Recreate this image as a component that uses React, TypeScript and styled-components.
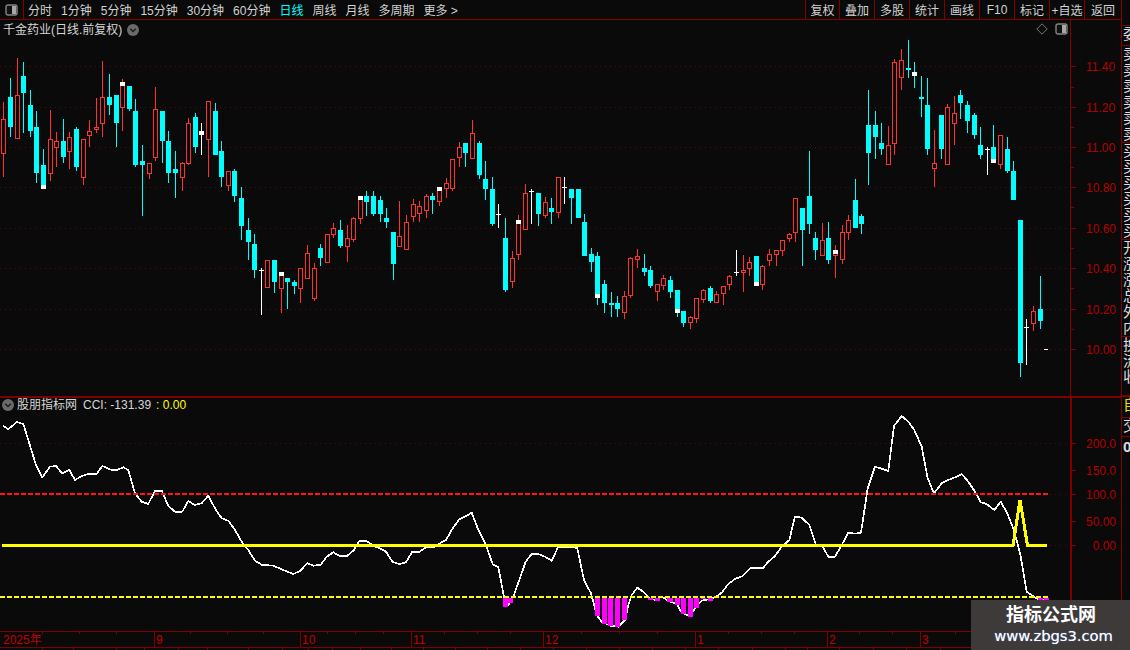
import React from 'react';
import styled, { createGlobalStyle } from 'styled-components';

const BG = '#0a0a0a';
const LINE = '#800000';
const DOT = '#560a0a';
const AXIS = '#b40000';
const FONT = '"Liberation Sans", "Noto Sans CJK SC", sans-serif';

const Global = createGlobalStyle`
  html, body { margin: 0; padding: 0; background: ${BG}; overflow: hidden; }
  #root { width: 1130px; height: 650px; }
`;

const Page = styled.div`
  position: relative;
  width: 1130px;
  height: 650px;
  display: grid;
  grid-template-columns: 1121px 9px;
  background: ${BG};
  font-family: ${FONT};
  overflow: hidden;
`;
const Main = styled.div`
  display: flex;
  flex-direction: column;
  min-width: 0;
`;
const Toolbar = styled.div`
  height: 19px;
  display: flex;
  align-items: stretch;
  border-bottom: 1px solid ${LINE};
  font-size: 12px;
  color: #d2d2d2;
`;
const LayoutBtn = styled.div`
  width: 23px;
  display: flex;
  align-items: center;
  justify-content: center;
  border-right: 1px solid ${LINE};
  box-sizing: content-box;
`;
const Tabs = styled.div`
  display: flex;
  align-items: center;
  gap: 9px;
  padding-left: 4px;
  flex: 1;
`;
const Tab = styled.span<{ $active?: boolean }>`
  color: ${p => (p.$active ? '#00ffff' : '#d2d2d2')};
  white-space: nowrap;
`;
const Actions = styled.div`
  display: flex;
  align-items: stretch;
`;
const Action = styled.div`
  width: 34px;
  border-left: 1px solid ${LINE};
  display: flex;
  align-items: center;
  justify-content: center;
  white-space: nowrap;
  &:first-child { width: 33px; }
  &:last-child { width: 36px; }
`;

const PricePane = styled.div`
  position: relative;
  height: 376px;
`;
const PaneSvg = styled.svg`
  display: block;
`;
const PriceTitle = styled.div`
  position: absolute;
  left: 3px;
  top: 2px;
  display: flex;
  align-items: center;
  gap: 5px;
  font-size: 12px;
  line-height: 16px;
  color: #d6d6d6;
`;
const PaneTools = styled.div`
  position: absolute;
  left: 1036px;
  top: 3px;
  display: flex;
  align-items: center;
  gap: 7px;
`;
const IndicatorPane = styled.div`
  position: relative;
  height: 233px;
  border-top: 2px solid ${LINE};
`;
const IndicatorTitle = styled.div`
  position: absolute;
  left: 2px;
  top: -1px;
  display: flex;
  align-items: center;
  gap: 3px;
  font-size: 12px;
  line-height: 16px;
  color: #d6d6d6;
`;
const Reading = styled.span<{ $yellow?: boolean }>`
  margin-left: ${p => (p.$yellow ? '2px' : '3px')};
  font-size: 12px;
  color: ${p => (p.$yellow ? '#ffff00' : '#d6d6d6')};
`;
const DatePane = styled.div`
  height: 20px;
  overflow: hidden;
`;

const Sidebar = styled.div`
  display: flex;
  flex-direction: column;
  border-left: 1px solid ${LINE};
  overflow: hidden;
  height: 650px;
  box-sizing: border-box;
`;
const SideGroup = styled.div<{ $h: number; $thick?: boolean; $open?: boolean }>`
  height: ${p => p.$h}px;
  box-sizing: border-box;
  flex: none;
  overflow: hidden;
  border-bottom: ${p => (p.$open ? 0 : p.$thick ? 2 : 1)}px solid ${LINE};
  padding-left: 1px;
  padding-top: ${p => (p.$open ? 2 : 0)}px;
`;
const SideRow = styled.div<{ $color?: string; $bold?: boolean }>`
  height: 16.1px;
  line-height: 16px;
  font-size: 15px;
  white-space: nowrap;
  color: ${p => p.$color || '#dcdcdc'};
  font-weight: ${p => (p.$bold ? 700 : 400)};
`;

const Watermark = styled.div`
  position: absolute;
  left: 971px;
  top: 600px;
  width: 159px;
  height: 50px;
  background: #3e3a3a;
  display: flex;
  flex-direction: column;
  align-items: center;
  color: #fff;
`;
const WmTitle = styled.div`
  font-size: 18px;
  font-weight: 700;
  line-height: 22px;
  margin-top: 4px;
  margin-left: 1px;
`;
const WmUrl = styled.div`
  font-family: "DejaVu Sans", sans-serif;
  font-size: 14.7px;
  line-height: 20px;
  color: #fff;
  text-shadow: 0 0 1px #7fb0ff;
  margin-left: 6px;
`;

const PanelIcon = () => (
  <svg width="13" height="12" viewBox="0 0 13 12">
    <rect x="1" y="1" width="11" height="10" rx="2" fill="#111" stroke="#858585" strokeWidth="1.4" />
    <rect x="7" y="2" width="4" height="8" fill="#a8a8a8" />
  </svg>
);
const ChevronDisc = () => (
  <svg width="12" height="12" viewBox="0 0 12 12">
    <circle cx="6" cy="6" r="6" fill="#6a6a6a" />
    <path d="M3.2 4.8 L6 7.6 L8.8 4.8" fill="none" stroke="#1c1c1c" strokeWidth="1.4" />
  </svg>
);
const Diamond = () => (
  <svg width="12" height="12" viewBox="0 0 12 12">
    <path d="M6 .8 L11.2 6 L6 11.2 L.8 6 Z" fill="none" stroke="#777" strokeWidth="1" />
  </svg>
);

type K = [string, number, number, number, number, number?, number?];
const K_DATA: K[] = [
  ['r',102,177,119,153],['c',78,137,97,127],['r',58,138,95,138],['c',62,133,76,93],['c',90,137,105,131],
  ['c',111,183,127,173],['c',149,189,165,185,185,189],['r',110,181,139,173],['r',132,167,141,147],['c',119,163,141,157],
  ['r',132,169,137,151],['c',127,171,129,167],['r',139,185,139,177],['r',120,147,131,135],['r',98,133,127,129],
  ['r',61,137,97,123],['c',74,115,97,105],['c',95,147,95,123],['r',79,131,82,107,82,86],['c',86,111,86,109],
  ['c',99,167,111,165],['c',145,216,161,165],['r',163,179,163,173],['r',87,161,109,157],['c',111,163,111,141],
  ['c',131,183,141,173],['c',151,198,169,173],['r',162,191,163,177],['r',118,165,123,163],['c',113,153,117,147],
  ['w',123,155,131,135],['r',101,177,101,139],['c',103,155,111,155],['c',141,187,151,177],['r',171,191,171,185],
  ['c',169,202,171,196],['c',187,240,198,226],['c',218,260,230,242],['c',234,278,244,270],['x',268,315,270,271],
  ['r',260,287,260,287],['c',260,293,260,282],['r',272,313,272,288,272,276],['c',278,309,278,282],['c',280,294,282,286],
  ['r',268,303,268,288],['r',245,279,253,278],['r',263,301,268,298],['c',244,266,248,258],['r',234,263,234,262],
  ['r',223,238,228,234],['c',220,248,230,246],['r',225,262,238,246],['r',217,242,218,239],['r',196,224,196,218,196,200],
  ['c',191,216,196,202],['c',191,216,196,214],['c',196,222,200,214],['c',208,228,218,222],['c',232,280,232,264],
  ['r',201,247,236,246],['r',215,249,222,249],['r',199,222,204,216],['r',201,222,206,213],['r',194,218,196,210],
  ['c',193,214,196,200],['r',187,206,187,201,187,191],['r',178,198,183,188],['r',159,191,159,188],['r',142,167,147,157],
  ['c',143,167,143,153],['r',120,158,133,158],['c',141,179,143,175],['c',161,200,179,189],['c',177,226,189,224],
  ['x',204,228,214,215],['c',218,292,238,290],['r',251,288,258,281],['r',215,260,220,254,220,224],['r',184,230,193,229],
  ['x',189,224,191,192],['c',193,226,193,214],['r',197,218,202,215],['c',198,224,208,212],['r',177,218,177,212],
  ['x',177,204,187,188],['c',189,224,189,198],['c',189,218,189,218],['c',214,256,222,256],['c',248,272,254,262],
  ['c',252,305,256,294,294,298],['c',280,313,284,303],['c',292,317,303,305],['c',296,317,303,309],['r',291,319,296,312],
  ['r',257,298,258,295],['r',249,268,256,259],['c',254,276,268,272],['c',266,288,270,286],['r',284,301,284,291],
  ['r',275,290,278,285],['c',276,298,280,292],['c',290,317,290,309,309,313],['c',311,327,311,323],['r',316,329,317,322],
  ['r',298,323,298,318],['r',289,303,290,299],['c',286,303,288,301],['r',291,303,294,302],['r',286,305,286,293],
  ['r',275,290,276,284],['x',250,276,272,273],['r',255,292,270,272],['r',257,276,262,268],['c',256,286,256,282,282,286],
  ['r',265,290,266,284],['r',249,266,254,260],['r',250,266,250,254],['r',240,256,240,250],['r',233,242,234,238],
  ['r',198,242,198,232],['c',208,266,208,230],['c',151,234,196,224],['c',232,260,238,250],['r',223,255,240,255],
  ['c',222,264,238,260],['r',245,278,250,255,250,254],['r',225,264,232,259],['r',215,240,220,232],['c',179,228,200,228],
  ['c',214,234,216,224],['c',90,185,125,153],['c',111,159,125,137],['c',123,155,143,149],['r',126,164,145,164],
  ['r',59,155,62,143],['r',49,90,60,77],['c',40,78,68,70],['z',62,88,72,76],['c',76,117,97,99],
  ['c',78,155,105,149],['r',130,187,163,168],['c',115,159,115,149],['r',104,164,107,164],['r',96,145,113,123],
  ['c',90,119,95,103],['c',101,133,105,121],['c',113,139,115,135],['c',127,159,145,155],['x',147,175,149,150],
  ['c',125,163,147,159,159,163],['r',135,169,135,164],['c',137,173,149,171],['c',161,200,171,200],['c',220,377,220,363],
  ['x',319,365,327,328],['r',306,331,311,323],['c',276,329,309,321],
];

const pts = (x0: number, y0: number, raw: number[]) => {
  const out: string[] = [];
  for (let i = 0; i < raw.length; i += 2) out.push(`${(x0 + raw[i] / 3).toFixed(1)},${(y0 + raw[i + 1] / 3).toFixed(1)}`);
  return out;
};
const CCI = [
  ...pts(0, 390, [10,107,25,118,50,96,70,102,85,150,108,225,127,262,150,230,168,228,186,250,208,240,225,270,245,258,265,252,290,252,307,228,335,240,350,240,370,232,385,240,405,310,425,335,445,342,465,302,485,302,505,348,525,365,547,365,565,333,583,345,605,340,625,317,645,355,665,385,685,392,705,420,725,455,745,480,765,512,785,524,820,527,850,540,880,552,900,543,922,520,940,527,962,524,980,500,1000,487,1017,497,1042,497,1062,480,1078,453,1100,453,1125,470]),
  ...pts(380, 480, [0,205,18,215,37,245,58,252,78,247,97,215,118,215,137,203,163,200,180,190,198,180,218,145,238,118,258,108,275,98,293,145,318,195,338,253,355,262,372,350,385,375,400,350,418,300,437,245,455,222,475,222,495,230,515,242,535,200,575,200,592,205,612,300,633,340,645,385,650,405,665,425,690,437,715,440,735,420,745,375,755,345,772,323,790,335,808,355,825,360,845,350,870,365,890,372,905,398,930,408,945,385,965,362,985,358,1005,352,1025,338,1045,312,1065,297,1088,288,1110,265,1140,263]),
  ...pts(760, 390, [10,533,25,515,45,498,65,470,88,450,105,380,125,383,148,405,168,465,185,465,205,500,225,500,245,465,265,428,285,431,303,428,323,295,345,230,365,236,385,243,402,108,425,78,445,95,463,120,485,170,503,265,522,310,545,280,565,270,585,262,605,252,625,275,645,305,662,337,680,342,703,360,722,335,742,370,762,420,782,500,800,605,825,622,840,630,860,630]),
].join(' ');

const BARS: [number, number, number][] = [
  [503,5,607],[508,5,603],[595,5,616],[602,5,624],[608,5,626],[615,5,627],[622,5,620],[648,5,600],[655,5,601],
  [667,6,602],[675,5,605],[681,5,614],[688,5,617],[694,5,608],[701,5,599],[708,5,601],[1038,5,600],[1044,5,600],
];

const PRICE_TICKS: [string, number][] = [
  ['11.40',66],['11.20',107],['11.00',147],['10.80',187],['10.60',228],['10.40',268],['10.20',309],['10.00',349],
];
const PRICE_MINOR = [87,127,167,207,248,288,329];
const CCI_TICKS: [string, number][] = [['200.0',443],['150.0',470],['100.0',494],['50.00',521],['0.00',545]];
const MONTHS: [string, number, number][] = [['2025年',0,3],['9',154,156],['10',300,302],['11',411,413],['12',543,545],['1',695,697],['2',827,829],['3',920,922]];
const TOP_TICKS = [42,79,116,190,227,263,327,355,383,444,477,510,581,619,657,728,761,794,859,892,955,990,1025];
const BOT_TICKS = [42,73,116,144,178,207,248,282,308,332,360,391,423,455,487,520,553,586,619,652,685,718,752,785,807,839,873,906,940,973];

const Candle = ({ k, i }: { k: K; i: number }) => {
  const x = Math.round(3.4 + 6.6 * i);
  const [t, hi, lo, top, bot, capA, capB] = k;
  if (t === 'x') {
    return (
      <g>
        <rect x={x} y={hi} width={1} height={lo - hi} fill="#fff" />
        <rect x={x - 2} y={top} width={5} height={Math.max(1, bot - top)} fill="#fff" />
      </g>
    );
  }
  if (t === 'w' || t === 'z') {
    return (
      <g>
        <rect x={x} y={hi} width={1} height={lo - hi} fill={t === 'z' ? '#00ffff' : '#fff'} />
        <rect x={x - 2} y={top} width={5} height={bot - top} fill="#fff" />
      </g>
    );
  }
  if (t === 'c') {
    return (
      <g>
        <rect x={x} y={hi} width={1} height={lo - hi} fill="#00ffff" />
        <rect x={x - 2} y={top} width={5} height={bot - top} fill="#00ffff" />
        {capA !== undefined && <rect x={x - 2} y={capA} width={5} height={(capB as number) - capA} fill="#fff" />}
      </g>
    );
  }
  return (
    <g>
      <rect x={x} y={hi} width={1} height={lo - hi} fill="#ff3232" />
      <rect x={x - 2} y={top} width={4} height={bot - top} fill={BG} stroke="#ff3232" strokeWidth={1} transform="translate(.5 .5)" />
      {capA !== undefined && <rect x={x - 2} y={top} width={5} height={(capB as number) - top} fill="#fff" />}
    </g>
  );
};

const AxisLabel = styled.text`
  font-family: "Liberation Sans", sans-serif;
  font-size: 12px;
  fill: ${AXIS};
`;
const MonthLabel = styled.text`
  font-family: "Liberation Sans", "Noto Sans CJK SC", sans-serif;
  font-size: 12px;
  fill: #c00000;
`;
const PeekLabel = styled.text<{ $cyan?: boolean }>`
  font-family: "Liberation Sans", "Noto Sans CJK SC", sans-serif;
  font-size: 14px;
  fill: ${p => (p.$cyan ? '#00ffff' : '#e8e8e8')};
`;

const TABS = ['分时','1分钟','5分钟','15分钟','30分钟','60分钟','日线','周线','月线','多周期','更多 >'];
const ACTIONS = ['复权','叠加','多股','统计','画线','F10','标记','+自选','返回'];
const SIDE_GROUPS: { h: number; rows: string[] }[] = [
  { h: 26, rows: [] },
  { h: 20, rows: ['委比'] },
  { h: 97, rows: ['卖五','卖四','卖三','卖二','卖一','卖'] },
  { h: 97, rows: ['买一','买二','买三','买四','买五','买'] },
  { h: 97, rows: ['开盘','涨跌','涨幅','总手','外盘','内盘'] },
];

export default function App() {
  return (
    <Page>
      <Global />
      <Main>
        <Toolbar>
          <LayoutBtn><PanelIcon /></LayoutBtn>
          <Tabs>
            {TABS.map(t => <Tab key={t} $active={t === '日线'}>{t}</Tab>)}
          </Tabs>
          <Actions>
            {ACTIONS.map(a => <Action key={a}>{a}</Action>)}
          </Actions>
        </Toolbar>
        <PricePane>
          <PaneSvg width={1121} height={376} viewBox="0 20 1121 376" shapeRendering="crispEdges">
            {PRICE_TICKS.map(([, y]) => (
              <line key={y} x1={0} x2={1070} y1={y + 0.5} y2={y + 0.5} stroke={DOT} strokeDasharray="1 4" />
            ))}
            <rect x={1070} y={20} width={1} height={376} fill={LINE} />
            {PRICE_TICKS.map(([l, y]) => (
              <g key={l}>
                <rect x={1071} y={y} width={5} height={1} fill={LINE} />
                <AxisLabel x={1086} y={y + 5}>{l}</AxisLabel>
              </g>
            ))}
            {PRICE_MINOR.map(y => <rect key={y} x={1071} y={y} width={3} height={1} fill={LINE} />)}
            {K_DATA.map((k, i) => <Candle key={i} k={k} i={i} />)}
            <rect x={1044} y={349} width={4} height={1} fill="#fff" />
          </PaneSvg>
          <PriceTitle>千金药业(日线.前复权)<ChevronDisc /></PriceTitle>
          <PaneTools><Diamond /><PanelIcon /></PaneTools>
        </PricePane>
        <IndicatorPane>
          <PaneSvg width={1121} height={231} viewBox="0 398 1121 231" shapeRendering="crispEdges">
            {[443,494,545].map(y => (
              <line key={y} x1={0} x2={1070} y1={y + 0.5} y2={y + 0.5} stroke={DOT} strokeDasharray="1 4" />
            ))}
            <rect x={1070} y={398} width={2} height={232} fill={LINE} />
            {CCI_TICKS.map(([l, y]) => (
              <g key={l}>
                <rect x={1072} y={y} width={4} height={1} fill={LINE} />
                <AxisLabel x={1116} y={y + 5} textAnchor="end">{l}</AxisLabel>
              </g>
            ))}
            <polyline points={CCI} fill="none" stroke="#fff" strokeWidth={1.7} strokeLinejoin="round" />
            {BARS.map(([x, w, b]) => <rect key={x} x={x} y={598} width={w} height={b - 598} fill="#ff00ff" />)}
            <line x1={0} x2={1049} y1={494} y2={494} stroke="#ff1414" strokeWidth={2} strokeDasharray="5 2" />
            <line x1={0} x2={1049} y1={597} y2={597} stroke="#ffff00" strokeWidth={2} strokeDasharray="5 2" />
            <polyline points="2,545.5 1013,545.5 1020,500 1027.5,545.5 1047,545.5" fill="none" stroke="#ffff00" strokeWidth={3} strokeLinejoin="miter" />
          </PaneSvg>
          <IndicatorTitle>
            <ChevronDisc />
            股朋指标网
            <Reading>CCI: -131.39</Reading>
            <Reading $yellow>: 0.00</Reading>
          </IndicatorTitle>
        </IndicatorPane>
        <DatePane>
          <PaneSvg width={1121} height={20} viewBox="0 630 1121 20" shapeRendering="crispEdges">
            <rect x={0} y={630} width={1121} height={1} fill={LINE} />
            <rect x={0} y={646} width={1121} height={1} fill={LINE} />
            {TOP_TICKS.map(x => <rect key={x} x={x} y={631} width={1} height={2} fill={LINE} />)}
            {BOT_TICKS.map(x => <rect key={x} x={x} y={647} width={1} height={3} fill={LINE} />)}
            {MONTHS.map(([l, x, tx]) => (
              <g key={l}>
                {x > 0 && <rect x={x} y={631} width={1} height={15} fill={LINE} />}
                <MonthLabel x={tx} y={643}>{l}</MonthLabel>
              </g>
            ))}
            <PeekLabel x={14} y={662}>上证</PeekLabel>
            <PeekLabel x={47} y={662}>卜</PeekLabel>
            <PeekLabel x={824} y={662}>卜</PeekLabel>
            <PeekLabel $cyan x={842} y={662}>百亚</PeekLabel>
          </PaneSvg>
        </DatePane>
      </Main>
      <Sidebar>
        {SIDE_GROUPS.map((g, i) => (
          <SideGroup key={i} $h={g.h}>
            {g.rows.map(r => <SideRow key={r}>{r}</SideRow>)}
          </SideGroup>
        ))}
        <SideGroup $h={60} $thick>
          <SideRow>换手</SideRow>
          <SideRow>流通</SideRow>
          <SideRow>收益</SideRow>
        </SideGroup>
        <SideGroup $h={21}><SideRow $color="#e0e000">自选</SideRow></SideGroup>
        <SideGroup $h={19}><SideRow>交易</SideRow></SideGroup>
        <SideGroup $h={40} $open><SideRow $bold>0.00</SideRow></SideGroup>
      </Sidebar>
      <Watermark>
        <WmTitle>指标公式网</WmTitle>
        <WmUrl>www.zbgs3.com</WmUrl>
      </Watermark>
    </Page>
  );
}
